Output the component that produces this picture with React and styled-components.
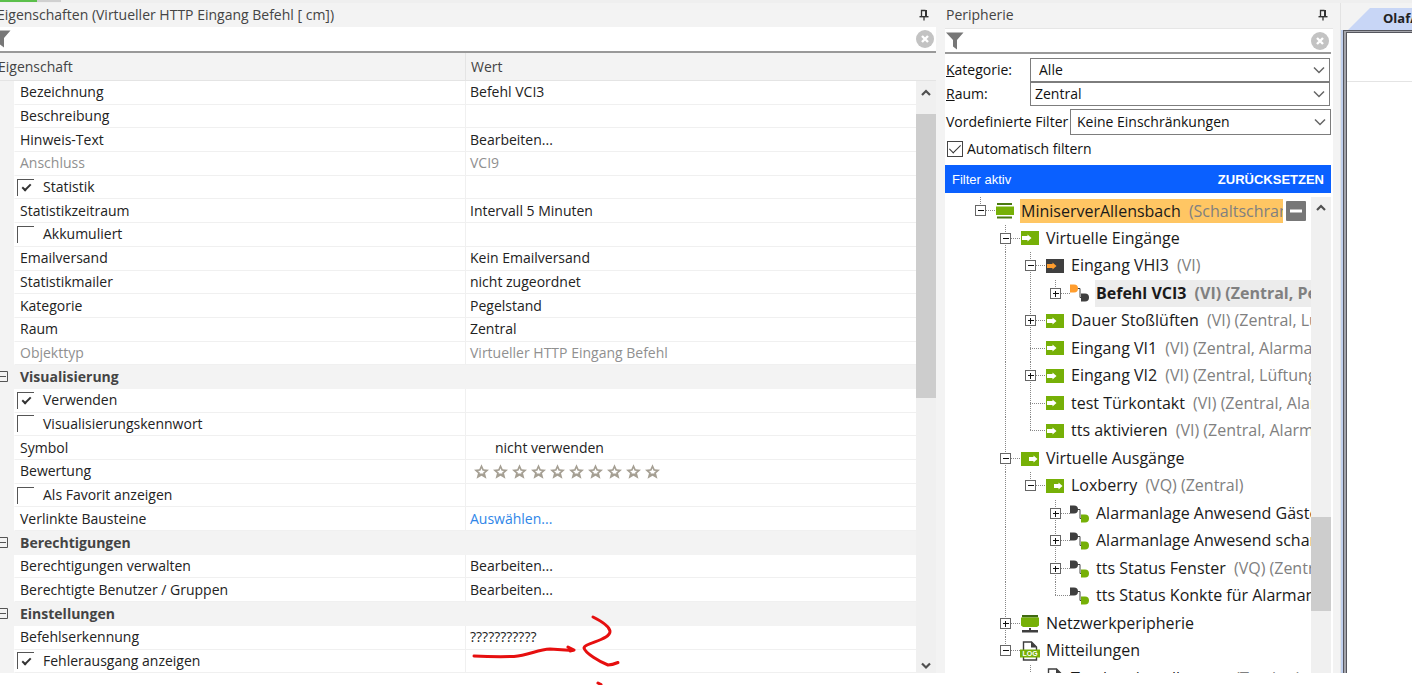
import { useState } from 'react';
import styled, { createGlobalStyle, css } from 'styled-components';

const GlobalStyle = createGlobalStyle`
  * {
    box-sizing: border-box;
  }

  body {
    margin: 0;
    overflow: hidden;
    background: #fff;
    color: #222;
    font-family: 'Open Sans', 'Segoe UI', sans-serif;
    font-size: 14px;
    line-height: 20px;
  }

  button, input, select {
    margin: 0;
    padding: 0;
    border: none;
    border-radius: 0;
    background: none;
    color: inherit;
    font: inherit;
  }
`;

// Window layout
const Window = styled.div`
  position: relative;
  display: flex;
  flex-direction: column;
  height: 100vh;
  padding-bottom: 12px;
  overflow: hidden;
`;

const LoadStrip = styled.div`
  display: flex;
  height: 3px;
  background: #efefef;
`;

const LoadPart = styled.div`
  width: ${({ $width }) => $width}px;
  height: 2px;
  background: ${({ $color }) => $color};
`;

const Docks = styled.div`
  display: grid;
  grid-template-columns: minmax(0, 1fr) 404px 72px;
  grid-template-rows: minmax(0, 1fr);
  flex: 1;
  min-height: 0;
  background: #f3f3f3;
`;

const PropertyDock = styled.section`
  display: flex;
  flex-direction: column;
  min-width: 0;
  margin-left: -8px;
`;

const PeripheryDock = styled.section`
  display: flex;
  flex-direction: column;
  min-width: 0;
  padding: 0 7px 0 9px;
`;

const TitleBar = styled.header`
  display: flex;
  align-items: center;
  justify-content: space-between;
  height: ${({ $height }) => $height}px;
  padding: 0 ${({ $right }) => $right}px ${({ $bottom }) => $bottom}px ${({ $left }) => $left}px;
  color: #444;
`;

const Title = styled.h2`
  margin: 0;
  font-size: 14px;
  font-weight: 400;
  white-space: nowrap;
`;

const IconButton = styled.button`
  display: grid;
  place-items: center;
`;

const FilterRow = styled.div`
  display: flex;
  align-items: center;
  gap: 4px;
  height: ${({ $height }) => $height}px;
  padding-right: 2px;
  border-bottom: 2px solid #999;
  background: #fff;
`;

const FilterInput = styled.input`
  flex: 1;
  min-width: 0;
  outline: none;
`;

// Property grid
const GridArea = styled.div`
  display: grid;
  grid-template-columns: minmax(0, 1fr) 20px;
  grid-template-rows: 28px minmax(0, 1fr);
  flex: 1;
  min-height: 0;
`;

const PropertyTable = styled.table`
  display: contents;
`;

const TableHead = styled.thead`
  display: grid;
  grid-column: 1 / -1;
  padding-right: 20px;
  border-bottom: 1px solid #e4e4e4;
`;

const TableBody = styled.tbody`
  display: flex;
  flex-direction: column;
  grid-column: 1;
  min-height: 0;
  background: #fff;
`;

const columns = css`
  display: grid;
  grid-template-columns: 22px minmax(0, 1fr) minmax(0, 1fr);
`;

const HeadRow = styled.tr`
  ${columns}
`;

const HeadCell = styled.th`
  grid-column: ${({ $span }) => $span};
  padding: 4px 5px 3px;
  border-left: 1px solid ${({ $line }) => ($line ? '#e4e4e4' : 'transparent')};
  color: #444;
  font-weight: 400;
  text-align: left;
`;

const Row = styled.tr`
  ${columns}
  flex: 1;
  min-height: 0;
  background: ${({ $group }) => ($group ? '#f3f3f3' : '#fff')};
`;

const Gutter = styled.td`
  display: flex;
  align-items: center;
  padding: 0 0 0 5px;
  background: #f3f3f3;
`;

const Cell = styled.td`
  display: flex;
  align-items: center;
  min-width: 0;
  padding: 0 0 0 ${({ $indent }) => $indent}px;
  border-bottom: 1px solid #f0f0f0;
  border-left: 1px solid ${({ $line }) => ($line ? '#f0f0f0' : 'transparent')};
  color: ${({ $muted }) => ($muted ? '#909090' : '#222')};
  white-space: nowrap;
`;

const GroupCell = styled.th`
  display: flex;
  align-items: center;
  grid-column: 2 / -1;
  padding: 0 0 0 6px;
  color: #444;
  font-weight: 700;
`;

const CheckLabel = styled.label`
  display: flex;
  align-items: center;
  gap: 9px;
`;

const CellCheck = styled.input`
  display: grid;
  place-content: center;
  width: 17px;
  height: 17px;
  appearance: none;
  border-top: 1px solid #555;
  border-left: 1px solid #555;

  &:checked::after {
    content: '';
    width: 3px;
    height: 7px;
    margin-bottom: 2px;
    border: solid #333;
    border-width: 0 2px 2px 0;
    transform: rotate(45deg);
  }
`;

const CellLink = styled.a`
  color: #2f86e8;
  text-decoration: none;
`;

const Stars = styled.span`
  display: flex;
  gap: 4px;
`;

// Scroll bar
const ScrollTrack = styled.div`
  display: grid;
  grid-template-rows: ${({ $rows }) => $rows};
  width: 20px;
  background: #f0f0f0;
`;

const Thumb = styled.div`
  grid-row: 3;
  background: #cdcdcd;
`;

const ScrollButton = styled.button`
  display: grid;
  grid-row: ${({ $row }) => $row};
  place-items: center;
`;

// Periphery panel
const PeripheryBody = styled.div`
  display: flex;
  flex-direction: column;
  flex: 1;
  min-height: 0;
  padding-right: 2px;
  border-top: 1px solid #e6e6e6;
  background: #fff;
`;

const FieldList = styled.div`
  display: flex;
  flex-direction: column;
  height: 82px;
  padding-top: 4px;
`;

const FieldRow = styled.div`
  display: grid;
  grid-template-columns: ${({ $label }) => $label}px minmax(0, 1fr);
  align-items: center;
  height: ${({ $height }) => $height}px;
  padding: 0 ${({ $right }) => $right}px 0 1px;
  color: #111;
  white-space: nowrap;

  &:last-child {
    margin-top: 3px;
  }
`;

const SelectBox = styled.div`
  display: grid;
  grid-template-columns: minmax(0, 1fr) 20px;
  align-items: center;
  height: 100%;
  border: 1px solid #7d7d7d;

  svg {
    grid-area: 1 / 2;
    justify-self: center;
    pointer-events: none;
  }
`;

const Select = styled.select`
  grid-area: 1 / 1 / 2 / 3;
  height: 20px;
  padding-left: ${({ $indent }) => $indent}px;
  appearance: none;
`;

const AutoFilter = styled.label`
  display: flex;
  align-items: center;
  gap: 4px;
  height: 29px;
  padding: 0 0 4px 2px;
  color: #111;
`;

const BoxCheck = styled(CellCheck)`
  width: 16px;
  height: 16px;
  border: 1px solid #444;

  &:checked::after {
    width: 5px;
    height: 10px;
    border-width: 0 1px 1px 0;
  }
`;

const ActiveBar = styled.div`
  display: flex;
  align-items: center;
  justify-content: space-between;
  height: 28px;
  margin-bottom: 4px;
  padding: 2px 7px 0;
  background: #0a60ff;
  color: #fff;
  font-family: 'Liberation Sans', Arial, sans-serif;
  font-size: 13px;
`;

const ResetButton = styled.button`
  font-weight: 700;
`;

const TreeArea = styled.div`
  display: flex;
  flex: 1;
  min-height: 0;
`;

const Tree = styled.div`
  display: grid;
  grid-template-rows: repeat(17, minmax(0, 1fr)) 8px;
  flex: 1;
  min-width: 0;
  padding-left: 23px;
  overflow: hidden;
`;

const TreeRow = styled.div`
  display: flex;
  min-width: 0;
  overflow: hidden;
  font-size: 16px;
  white-space: nowrap;
`;

const Guide = styled.span`
  flex: none;
  width: 25px;
  height: 100%;
  min-height: 27px;
`;

const Expander = styled.button`
  flex: none;
  width: 25px;
  height: 100%;
  min-height: 27px;
`;

const GuideSvg = styled.svg`
  display: block;
  width: 25px;
  height: 100%;
  overflow: visible;
`;

const IconCell = styled.span`
  display: grid;
  flex: none;
  place-items: center start;
  width: 25px;
  min-height: 27px;
  padding-left: ${({ $wide }) => ($wide ? 2 : 3)}px;
`;

const NodeLabel = styled.span`
  flex: 1;
  align-self: ${({ $mark }) => ($mark ? 'center' : 'stretch')};
  min-width: 0;
  margin-left: 2px;
  padding-left: 1px;
  overflow: hidden;
  background: ${({ $mark, $selected }) => ($mark ? '#ffc663' : $selected ? '#ececec' : 'none')};
  color: #1a1a1a;
  font-weight: ${({ $selected }) => ($selected ? 700 : 400)};
  line-height: ${({ $mark }) => ($mark ? 24 : 27)}px;
`;

const Meta = styled.span`
  margin-left: 4px;
  color: #808080;
`;

const RemoveButton = styled.button`
  display: grid;
  flex: none;
  align-self: center;
  place-items: center;
  width: 20px;
  height: 20px;
  margin: 0 5px 0 3px;
  border-radius: 1px;
  background: #777;
`;

// Document area
const DocumentDock = styled.section`
  display: flex;
  flex-direction: column;
  min-width: 0;
  border-left: 1px solid #e3e3e3;
`;

const TabBar = styled.div`
  display: flex;
  height: 27px;
  padding: 5px 0 0 7px;
`;

const Tab = styled.button`
  flex: none;
  width: 120px;
  padding: 0 0 3px 35px;
  background: #c8d6f6;
  clip-path: polygon(0 100%, 22px 0, 100% 0, 100% 100%);
  font-size: 13px;
  font-weight: 700;
  text-align: left;
`;

const Frame = styled.div`
  flex: 1;
  border-left: 2px solid #c0d0ee;
  background: #fff;
`;

const Page = styled.div`
  height: 100%;
  padding: 2px 0 0 3px;
  border-top: 1px solid #55565e;
  border-left: 1px solid #55565e;
  box-shadow: inset 2px 1px 0 #a4a5ab, inset 3px 2px 0 #55565e;
`;

const PageHead = styled.div`
  height: 49px;
  border-bottom: 1px solid #e4e4e4;
`;

const Annotation = styled.svg`
  position: absolute;
  top: 610px;
  left: 465px;
  pointer-events: none;
`;

// Icons
const PinIcon = () => (
  <svg width="10" height="12" viewBox="0 0 10 12" fill="none" stroke="#333">
    <path d="M2.500 7v-5.500h4" strokeWidth="1.300" />
    <path d="M7 1v6.500" strokeWidth="2" />
    <path d="M0.500 7.700h9" strokeWidth="1.400" />
    <path d="M5 8v3.500" strokeWidth="1.300" />
  </svg>
);

const ClearIcon = () => (
  <svg width="18" height="18" viewBox="0 0 18 18">
    <circle cx="9" cy="9" r="9" fill="#c3c3c3" />
    <path d="M6 6l6 6M12 6l-6 6" stroke="#fff" strokeWidth="2.4" />
  </svg>
);

const FunnelIcon = () => (
  <svg width="19" height="18" viewBox="0 0 19 18">
    <path d="M1 0.500h17.500l-6.500 7.500v9.500l-4-3v-6.500z" fill="#777" />
  </svg>
);

const Chevron = ({ up, bold }) => (
  <svg width="12" height="8" viewBox="0 0 12 8" fill="none" stroke={bold ? '#505050' : '#666'}>
    <path
      d={bold ? (up ? 'M2 6l4-4 4 4' : 'M2 1.500l4 4 4-4') : 'M1 1.500l5 5 5-5'}
      strokeWidth={bold ? 2.2 : 1.5}
    />
  </svg>
);

const CollapseIcon = () => (
  <svg width="12" height="12" viewBox="0 0 12 12" fill="none" stroke="#555">
    <path d="M0.500 0.500h10v10h-10zM3 5.500h6" />
  </svg>
);

const StarIcon = () => (
  <svg width="15" height="15" viewBox="0.700 0.300 13.600 13.600">
    <path d="M7.500 0.600l2 4.500 4.900.4-3.700 3.200 1.300 5-4.500-2.700-4.500 2.700 1.300-5-3.700-3.200 4.900-.4z" fill="#a59f93" />
    <path d="M7.500 4.200l1 2.200 2.200.3-1.700 1.400.2.800h-3.400l.2-.8-1.700-1.400 2.200-.3z" fill="#fff" />
  </svg>
);

const BlockIcon = ({ dark, out }) => (
  <svg width="18" height="14" viewBox="0 0 18 14">
    <path d="M0 0h18v14h-18z" fill={dark ? '#3f3f3f' : '#76b007'} />
    <path
      d={out ? 'M8 5h4.500v-1.500l4 3.500-4 3.500v-1.500h-4.500z' : 'M1 5h5.500v-1.500l4 3.500-4 3.500v-1.500h-5.500z'}
      fill={dark ? '#ff9d2e' : '#fff'}
    />
  </svg>
);

const CommandIcon = ({ from, to }) => (
  <svg width="19" height="18" viewBox="0 0 19 18">
    <path d="M7 4.500h3v9h2" fill="none" stroke="#444" />
    <path d="M0 0.500h4a4 4 0 0 1 0 8h-4z" fill={from} />
    <path d="M11 9.500h4a4 4 0 0 1 0 8h-4z" fill={to} />
  </svg>
);

const ServerIcon = () => (
  <svg width="18" height="16" viewBox="0 0 18 16">
    <path d="M1 0h15v2h-15zM1 13.500h15v2h-15z" fill="#4a7a10" />
    <path d="M0 3.500h18v8.500h-18z" fill="#76b007" />
  </svg>
);

const NetworkIcon = () => (
  <svg width="18" height="18" viewBox="0 0 18 18">
    <path d="M1 0h16v2.500h-16z" fill="#3f6a10" />
    <path d="M0 2.500h18v8l-2 1.500h-14l-2-1.500z" fill="#76b007" />
    <path d="M8 13h2v2h7v2.500h-16v-2.500h7z" fill="#3f3f3f" />
  </svg>
);

const DocIcon = ({ log }) => (
  <svg width="20" height="20" viewBox="0 0 20 20">
    <path d="M3.500 19v-18h8l5 5v13z" fill="#fff" stroke="#3f3f3f" strokeWidth="1.400" />
    <path d="M11 0.500l6 6h-6z" fill="#3f3f3f" />
    {log && (
      <>
        <path d="M0 8.500h20v8h-20z" fill="#76b007" />
        <text x="10" y="15" fill="#fff" fontSize="7" fontWeight="700" textAnchor="middle" fontFamily="Liberation Sans">
          LOG
        </text>
      </>
    )}
  </svg>
);

const icons = {
  server: <ServerIcon />,
  input: <BlockIcon />,
  inputDark: <BlockIcon dark />,
  output: <BlockIcon out />,
  cmdIn: <CommandIcon from="#ff9d2e" to="#3f3f3f" />,
  cmdOut: <CommandIcon from="#3f3f3f" to="#76b007" />,
  network: <NetworkIcon />,
  log: <DocIcon log />,
  doc: <DocIcon />
};

const wideIcons = ['cmdIn', 'cmdOut', 'log', 'doc'];

// Data
const properties = [
  { name: 'Bezeichnung', value: 'Befehl VCI3' },
  { name: 'Beschreibung' },
  { name: 'Hinweis-Text', value: 'Bearbeiten...' },
  { name: 'Anschluss', value: 'VCI9', muted: true },
  { name: 'Statistik', check: true, on: true },
  { name: 'Statistikzeitraum', value: 'Intervall 5 Minuten' },
  { name: 'Akkumuliert', check: true },
  { name: 'Emailversand', value: 'Kein Emailversand' },
  { name: 'Statistikmailer', value: 'nicht zugeordnet' },
  { name: 'Kategorie', value: 'Pegelstand' },
  { name: 'Raum', value: 'Zentral' },
  { name: 'Objekttyp', value: 'Virtueller HTTP Eingang Befehl', muted: true },
  { name: 'Visualisierung', group: true },
  { name: 'Verwenden', check: true, on: true },
  { name: 'Visualisierungskennwort', check: true },
  { name: 'Symbol', value: 'nicht verwenden', indent: 29 },
  { name: 'Bewertung', stars: 10 },
  { name: 'Als Favorit anzeigen', check: true },
  { name: 'Verlinkte Bausteine', link: 'Auswählen...' },
  { name: 'Berechtigungen', group: true },
  { name: 'Berechtigungen verwalten', value: 'Bearbeiten...' },
  { name: 'Berechtigte Benutzer / Gruppen', value: 'Bearbeiten...' },
  { name: 'Einstellungen', group: true },
  { name: 'Befehlserkennung', value: '???????????' },
  { name: 'Fehlerausgang anzeigen', check: true, on: true }
];

// guides: one letter per level, n = none, l = line, u = up only, b = up and down
const nodes = [
  { guides: 'u', box: '-', icon: 'server', name: 'MiniserverAllensbach', meta: '(Schaltschrank)', mark: true },
  { guides: 'nb', box: '-', icon: 'input', name: 'Virtuelle Eingänge' },
  { guides: 'nlb', box: '-', icon: 'inputDark', name: 'Eingang VHI3', meta: '(VI)' },
  { guides: 'nllu', box: '+', icon: 'cmdIn', name: 'Befehl VCI3', meta: '(VI) (Zentral, Pegelstand)', selected: true },
  { guides: 'nlb', box: '+', icon: 'input', name: 'Dauer Stoßlüften', meta: '(VI) (Zentral, Lüftung)' },
  { guides: 'nlb', icon: 'input', name: 'Eingang VI1', meta: '(VI) (Zentral, Alarmanlage)' },
  { guides: 'nlb', box: '+', icon: 'input', name: 'Eingang VI2', meta: '(VI) (Zentral, Lüftung)' },
  { guides: 'nlb', icon: 'input', name: 'test Türkontakt', meta: '(VI) (Zentral, Alarmanlage)' },
  { guides: 'nlu', icon: 'input', name: 'tts aktivieren', meta: '(VI) (Zentral, Alarmanlage)' },
  { guides: 'nb', box: '-', icon: 'output', name: 'Virtuelle Ausgänge' },
  { guides: 'nlu', box: '-', icon: 'output', name: 'Loxberry', meta: '(VQ) (Zentral)' },
  { guides: 'nlnb', box: '+', icon: 'cmdOut', name: 'Alarmanlage Anwesend Gäste' },
  { guides: 'nlnb', box: '+', icon: 'cmdOut', name: 'Alarmanlage Anwesend scharf' },
  { guides: 'nlnb', box: '+', icon: 'cmdOut', name: 'tts Status Fenster', meta: '(VQ) (Zentral)' },
  { guides: 'nlnu', icon: 'cmdOut', name: 'tts Status Konkte für Alarmanlage' },
  { guides: 'nb', box: '+', icon: 'network', name: 'Netzwerkperipherie' },
  { guides: 'nu', box: '-', icon: 'log', name: 'Mitteilungen' },
  { guides: 'nnu', box: '-', icon: 'doc', name: 'Trackereinstellungen', meta: '(Tracker)' }
];

const GuideLines = ({ kind, box }) => (
  <GuideSvg shapeRendering="crispEdges" stroke="#888">
    {kind !== 'n' && <line x1="12.5" x2="12.5" y1="0" y2={kind === 'u' ? '50%' : '100%'} strokeDasharray="1 1" />}
    {(kind === 'u' || kind === 'b') && <line x1="12" x2="27" y1="50%" y2="50%" strokeDasharray="1 1" />}
    {box && (
      <svg x="7" y="50%" overflow="visible">
        <rect x="0.5" y="-5" width="10" height="10" fill="#fff" stroke="#666" />
        <path d={box === '+' ? 'M3 0h6M5.500 -3v6' : 'M3 0h6'} stroke="#111" />
      </svg>
    )}
  </GuideSvg>
);

const TreeNode = ({ node }) => (
  <TreeRow role="treeitem">
    {[...node.guides].map((kind, i) =>
      node.box && i === node.guides.length - 1 ? (
        <Expander key={i} type="button" aria-label={node.name}>
          <GuideLines kind={kind} box={node.box} />
        </Expander>
      ) : (
        <Guide key={i}>
          <GuideLines kind={kind} />
        </Guide>
      )
    )}
    <IconCell $wide={wideIcons.includes(node.icon)}>{icons[node.icon]}</IconCell>
    <NodeLabel $mark={node.mark} $selected={node.selected}>
      {node.name} {node.meta && <Meta>{node.meta}</Meta>}
    </NodeLabel>
    {node.mark && (
      <RemoveButton type="button" aria-label="Einklappen">
        <svg width="12" height="4">
          <path d="M0 2h12" stroke="#fff" strokeWidth="3" />
        </svg>
      </RemoveButton>
    )}
  </TreeRow>
);

const PropertyRow = ({ item, checked, onToggle }) => {
  if (item.group) {
    return (
      <Row $group>
        <Gutter>
          <IconButton type="button" aria-label={item.name}>
            <CollapseIcon />
          </IconButton>
        </Gutter>
        <GroupCell>{item.name}</GroupCell>
      </Row>
    );
  }

  return (
    <Row>
      <Gutter />
      <Cell $indent={item.check ? 2 : 5} $muted={item.muted}>
        {item.check ? (
          <CheckLabel>
            <CellCheck type="checkbox" checked={checked} onChange={onToggle} />
            {item.name}
          </CheckLabel>
        ) : (
          item.name
        )}
      </Cell>
      <Cell $line $indent={item.stars ? 8 : item.indent || 4} $muted={item.muted}>
        {item.value}
        {item.link && <CellLink href="#bausteine">{item.link}</CellLink>}
        {item.stars && (
          <Stars role="img" aria-label="Bewertung">
            {Array.from({ length: item.stars }, (_, i) => (
              <StarIcon key={i} />
            ))}
          </Stars>
        )}
      </Cell>
    </Row>
  );
};

const Scrollbar = ({ rows, down }) => (
  <ScrollTrack $rows={rows}>
    <ScrollButton $row={1} type="button" aria-label="Nach oben">
      <Chevron up bold />
    </ScrollButton>
    <Thumb />
    {down && (
      <ScrollButton $row={5} type="button" aria-label="Nach unten">
        <Chevron bold />
      </ScrollButton>
    )}
  </ScrollTrack>
);

const Fields = () => (
  <FieldList>
    <FieldRow $label={84} $height={24} $right={1}>
      <label htmlFor="kategorie"><u>K</u>ategorie:</label>
      <SelectBox>
        <Select id="kategorie" $indent={8}>
          <option>Alle</option>
        </Select>
        <Chevron />
      </SelectBox>
    </FieldRow>
    <FieldRow $label={84} $height={24} $right={1}>
      <label htmlFor="raum"><u>R</u>aum:</label>
      <SelectBox>
        <Select id="raum" $indent={4}>
          <option>Zentral</option>
        </Select>
        <Chevron />
      </SelectBox>
    </FieldRow>
    <FieldRow $label={124} $height={26} $right={0}>
      <label htmlFor="filter">Vordefinierte Filter</label>
      <SelectBox>
        <Select id="filter" $indent={6}>
          <option>Keine Einschränkungen</option>
        </Select>
        <Chevron />
      </SelectBox>
    </FieldRow>
  </FieldList>
);

const App = () => {
  const [checks, setChecks] = useState(() =>
    Object.fromEntries(properties.filter((p) => p.check).map((p) => [p.name, !!p.on]))
  );
  const [autoFilter, setAutoFilter] = useState(true);

  const toggle = (name) => setChecks({ ...checks, [name]: !checks[name] });

  return (
    <Window>
      <GlobalStyle />
      <LoadStrip>
        <LoadPart $width={37} $color="#5bbf4a" />
        <LoadPart $width={24} $color="#d0d0d0" />
      </LoadStrip>
      <Docks>
        <PropertyDock>
          <TitleBar $height={24} $left={5} $right={7} $bottom={0}>
            <Title>Eigenschaften (Virtueller HTTP Eingang Befehl [ cm])</Title>
            <IconButton type="button" aria-label="Anheften">
              <PinIcon />
            </IconButton>
          </TitleBar>
          <FilterRow $height={26}>
            <FunnelIcon />
            <FilterInput type="text" aria-label="Eigenschaften filtern" />
            <IconButton type="button" aria-label="Filter löschen">
              <ClearIcon />
            </IconButton>
          </FilterRow>
          <GridArea>
            <PropertyTable>
              <TableHead>
                <HeadRow>
                  <HeadCell $span="1 / 3">Eigenschaft</HeadCell>
                  <HeadCell $span="3" $line>Wert</HeadCell>
                </HeadRow>
              </TableHead>
              <TableBody>
                {properties.map((item) => (
                  <PropertyRow
                    key={item.name}
                    item={item}
                    checked={checks[item.name]}
                    onToggle={() => toggle(item.name)}
                  />
                ))}
              </TableBody>
            </PropertyTable>
            <Scrollbar rows="24px 9px 284fr 261fr 14px" down />
          </GridArea>
        </PropertyDock>

        <PeripheryDock>
          <TitleBar $height={25} $left={1} $right={5} $bottom={1}>
            <Title>Peripherie</Title>
            <IconButton type="button" aria-label="Anheften">
              <PinIcon />
            </IconButton>
          </TitleBar>
          <PeripheryBody>
            <FilterRow $height={25}>
              <FunnelIcon />
              <FilterInput type="text" aria-label="Peripherie filtern" />
              <IconButton type="button" aria-label="Filter löschen">
                <ClearIcon />
              </IconButton>
            </FilterRow>
            <Fields />
            <AutoFilter>
              <BoxCheck type="checkbox" checked={autoFilter} onChange={() => setAutoFilter(!autoFilter)} />
              Automatisch filtern
            </AutoFilter>
            <ActiveBar>
              Filter aktiv
              <ResetButton type="button">ZURÜCKSETZEN</ResetButton>
            </ActiveBar>
            <TreeArea>
              <Tree role="tree">
                {nodes.map((node) => (
                  <TreeNode key={node.name} node={node} />
                ))}
              </Tree>
              <Scrollbar rows="22px 298fr 94fr 62fr" />
            </TreeArea>
          </PeripheryBody>
        </PeripheryDock>

        <DocumentDock>
          <TabBar>
            <Tab type="button">OlafAllensbach</Tab>
          </TabBar>
          <Frame>
            <Page>
              <PageHead />
            </Page>
          </Frame>
        </DocumentDock>
      </Docks>
      <Annotation width="160" height="75" fill="none" stroke="#e60f0f" strokeWidth="3" strokeLinecap="round" strokeLinejoin="round">
        <path d="M9 46q20 1 40 .5c14-1 24-7 36-7.500l23 1.500M103 37l6 3-4 1" />
        <path d="M128 7q16 8 17 14c1 9-26 12-26 17 1 5 16 14 24 17q4 0 10-2.500" />
        <path d="M133 73l3 1.500" />
      </Annotation>
    </Window>
  );
};

export default App;
